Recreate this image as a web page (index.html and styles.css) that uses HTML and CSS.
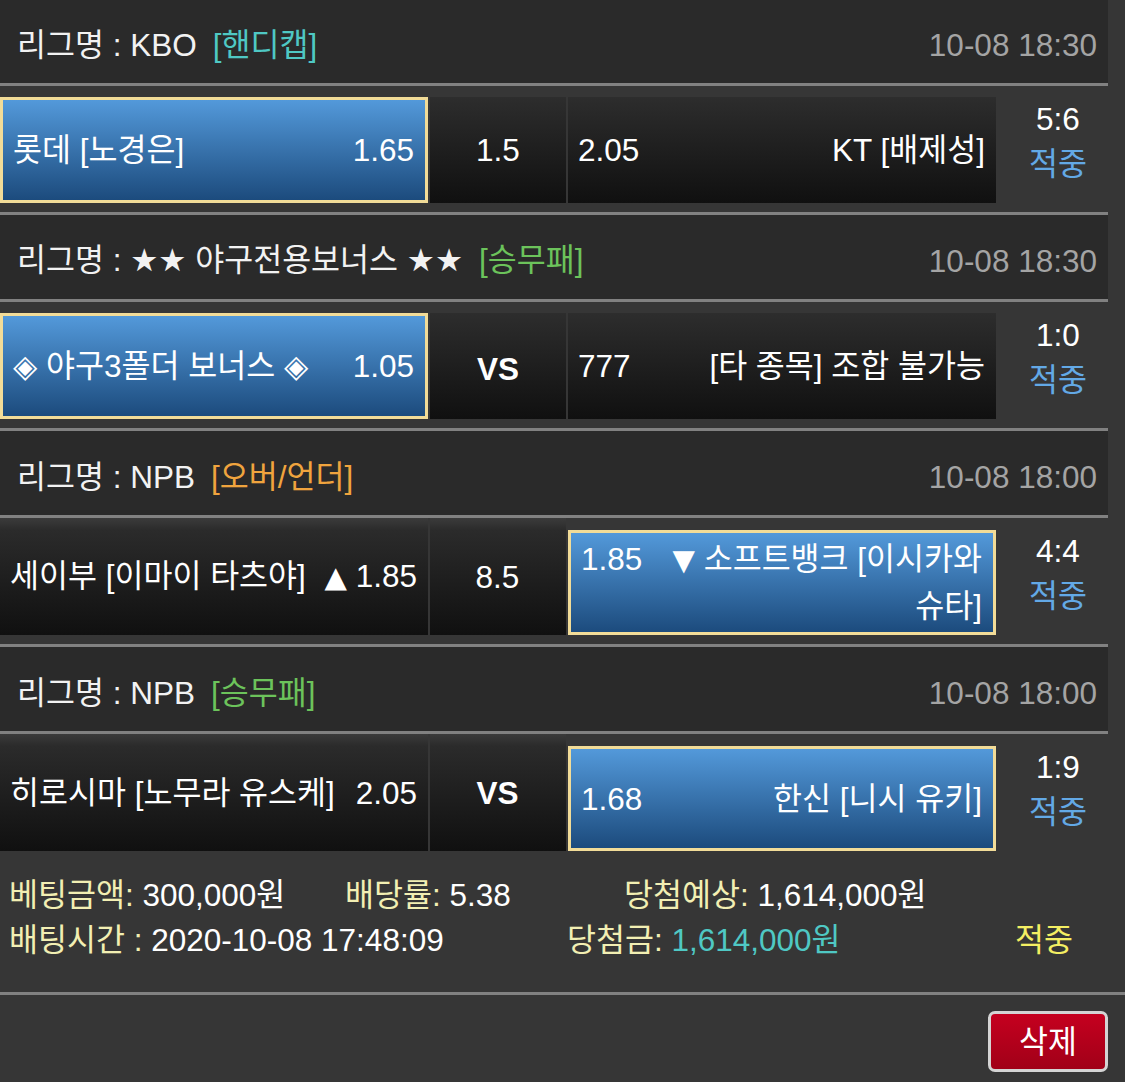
FILE: index.html
```html
<!DOCTYPE html>
<html lang="ko">
<head>
<meta charset="utf-8">
<title>베팅내역</title>
<link rel="stylesheet" href="styles.css">
</head>
<body>
<div class="slip">
  <section class="game">
    <div class="league"><span class="lname">리그명 : KBO<span class="tag teal">[핸디캡]</span></span><span class="time">10-08 18:30</span></div>
    <div class="match">
      <div class="cell side sel"><div class="inner"><span class="team">롯데 [노경은]</span><span class="odd">1.65</span></div></div>
      <div class="cell mid">1.5</div>
      <div class="cell side plain"><div class="inner"><span class="odd">2.05</span><span class="team r">KT [배제성]</span></div></div>
      <div class="score"><span>5:6</span><span class="hit">적중</span></div>
    </div>
  </section>

  <section class="game">
    <div class="league"><span class="lname">리그명 : <span class="star">★★</span> 야구전용보너스 <span class="star">★★</span><span class="tag green">[승무패]</span></span><span class="time">10-08 18:30</span></div>
    <div class="match">
      <div class="cell side sel"><div class="inner"><span class="team"><span class="sym">◈</span> 야구3폴더 보너스 <span class="sym">◈</span></span><span class="odd">1.05</span></div></div>
      <div class="cell mid vs">VS</div>
      <div class="cell side plain"><div class="inner"><span class="odd">777</span><span class="team r">[타 종목] 조합 불가능</span></div></div>
      <div class="score"><span>1:0</span><span class="hit">적중</span></div>
    </div>
  </section>

  <section class="game">
    <div class="league"><span class="lname">리그명 : NPB<span class="tag orange">[오버/언더]</span></span><span class="time">10-08 18:00</span></div>
    <div class="match flip">
      <div class="cell side plain"><div class="inner"><span class="team">세이부 [이마이 타츠야]</span><span class="odd"><span class="arr">▲</span> 1.85</span></div></div>
      <div class="cell mid plain">8.5</div>
      <div class="cell side sel"><div class="inner"><span class="odd">1.85</span><span class="team r wrap"><span class="arr">▼</span> 소프트뱅크 [이시카와 슈타]</span></div></div>
      <div class="score"><span>4:4</span><span class="hit">적중</span></div>
    </div>
  </section>

  <section class="game">
    <div class="league"><span class="lname">리그명 : NPB<span class="tag green">[승무패]</span></span><span class="time">10-08 18:00</span></div>
    <div class="match flip last">
      <div class="cell side plain"><div class="inner"><span class="team">히로시마 [노무라 유스케]</span><span class="odd">2.05</span></div></div>
      <div class="cell mid plain vs">VS</div>
      <div class="cell side sel"><div class="inner"><span class="odd">1.68</span><span class="team r">한신 [니시 유키]</span></div></div>
      <div class="score"><span>1:9</span><span class="hit">적중</span></div>
    </div>
  </section>

  <div class="summary">
    <div class="line">
      <span class="c1"><span class="lbl">베팅금액:</span> 300,000원</span>
      <span class="c2"><span class="lbl">배당률:</span> 5.38</span>
      <span><span class="lbl">당첨예상:</span> 1,614,000원</span>
    </div>
    <div class="line">
      <span class="d1"><span class="lbl">배팅시간 :</span> 2020-10-08 17:48:09</span>
      <span class="d2"><span class="lbl">당첨금:</span> <span class="win">1,614,000원</span></span>
      <span class="result">적중</span>
    </div>
  </div>

  <div class="actions">
    <button class="del" type="button">삭제</button>
  </div>
</div>
</body>
</html>
```

FILE: styles.css
```css
* {
  box-sizing: border-box;
}

html, body {
  margin: 0;
  padding: 0;
}

body {
  width: 1125px;
  height: 1082px;
  overflow: hidden;
  background: #363636;
  color: #ffffff;
  font-family: "Liberation Sans", "DejaVu Sans", "Noto Sans CJK KR", sans-serif;
  font-size: 30px;
  font-size-adjust: 0.555;
}

.slip {
  margin-top: -1px;
}

.game {
  width: 1108px;
}

.league {
  height: 87px;
  background: #2a2a2a;
  border-bottom: 3px solid #818181;
  display: flex;
  align-items: center;
  justify-content: space-between;
  padding: 7px 11px 0 17px;
  line-height: 1;
  white-space: nowrap;
}

.lname {
  color: #f2f2f2;
}

.star {
  font-family: "DejaVu Sans", sans-serif;
  font-size: 31px;
}

.tag {
  margin-left: 16px;
}

.teal { color: #4fc8c4; }
.green { color: #6cc35b; }
.orange { color: #f0a43e; }

.time {
  color: #a4a4a4;
}

.match {
  height: 129px;
  display: flex;
  gap: 2px;
  padding: 11px 0 9px;
  border-bottom: 3px solid #818181;
  line-height: 46px;
}

.match.flip {
  padding-top: 0;
}

.match.last {
  height: 117px;
  padding-bottom: 0;
  border-bottom: none;
}

.cell {
  display: flex;
  align-items: center;
}

.side {
  width: 428px;
}

.mid {
  width: 136px;
  justify-content: center;
  background: linear-gradient(#2d2d2d, #101010);
}

.vs {
  font-weight: bold;
  padding-top: 6px;
}

.plain {
  background: linear-gradient(#2d2d2d, #101010);
  padding: 0 11px 0 10px;
}

.flip .plain {
  background: linear-gradient(#3b3b3b 0, #2b2b2b 12px, #101010 100%);
}

.sel {
  background: linear-gradient(#5399da, #1c4b7d);
  border: 3px solid #f2dc98;
  padding: 0 11px 0 10px;
}

.flip .sel {
  margin-top: 12px;
}

.inner {
  width: 100%;
  display: flex;
  align-items: baseline;
  justify-content: space-between;
  white-space: nowrap;
}

.team.r {
  text-align: right;
}

.team.wrap {
  white-space: normal;
  word-break: keep-all;
  flex: 1;
  margin-left: 8px;
}

.sym {
  font-family: "DejaVu Sans", sans-serif;
  font-size: 32px;
}

.arr {
  font-family: "DejaVu Sans", sans-serif;
  font-size: 29px;
}

.score {
  flex: 1;
  padding-left: 10px;
  display: flex;
  flex-direction: column;
  align-items: center;
  line-height: 45px;
}

.flip .score {
  margin-top: 11px;
}

.hit {
  color: #63a9e6;
}

.summary {
  width: 1125px;
  height: 144px;
  padding: 22px 0 0 9px;
  border-bottom: 3px solid #818181;
  line-height: 45px;
  white-space: nowrap;
}

.line {
  display: flex;
}

.c1 { width: 336px; }
.c2 { width: 279px; }
.d1 { width: 558px; }
.d2 { width: 448px; }

.lbl {
  color: #f2efb3;
}

.win {
  color: #4fc8c4;
}

.result {
  color: #f4ef63;
}

.actions {
  display: flex;
  justify-content: flex-end;
  padding: 16px 17px 0 0;
}

.del {
  width: 120px;
  height: 61px;
  border: 3px solid #d4d4d4;
  border-radius: 7px;
  background: linear-gradient(#c5001f, #a10018);
  color: #ffffff;
  font-family: "Liberation Sans", "Noto Sans CJK KR", sans-serif;
  font-size: 30px;
  font-size-adjust: 0.555;
  padding: 0;
  line-height: 1;
}
```
